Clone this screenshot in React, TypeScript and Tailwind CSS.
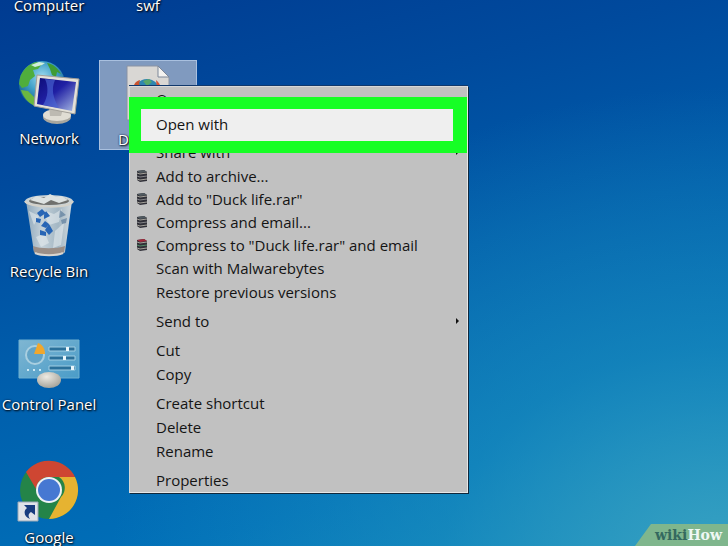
import type { ReactNode } from "react";
import clsx from "clsx";

interface MenuEntry {
  label: string;
  archive?: "dark" | "red";
  submenu?: boolean;
}

const menuGroups: MenuEntry[][] = [
  [
    { label: "Share with", submenu: true },
    { label: "Add to archive...", archive: "dark" },
    { label: 'Add to "Duck life.rar"', archive: "dark" },
    { label: "Compress and email...", archive: "dark" },
    { label: 'Compress to "Duck life.rar" and email', archive: "red" },
    { label: "Scan with Malwarebytes" },
    { label: "Restore previous versions" },
  ],
  [{ label: "Send to", submenu: true }],
  [{ label: "Cut" }, { label: "Copy" }],
  [{ label: "Create shortcut" }, { label: "Delete" }, { label: "Rename" }],
  [{ label: "Properties" }],
];

function NetworkIcon() {
  return (
    <svg viewBox="0 0 64 64" className="size-16" aria-hidden="true">
      <defs>
        <radialGradient id="globe" cx="50%" cy="35%" r="65%">
          <stop offset="0" stopColor="#9fdcf0" />
          <stop offset="0.5" stopColor="#3f9fc8" />
          <stop offset="1" stopColor="#125a86" />
        </radialGradient>
        <linearGradient id="screen" x1="0" y1="0" x2="1" y2="1">
          <stop offset="0" stopColor="#0c0c78" />
          <stop offset="0.45" stopColor="#2020a4" />
          <stop offset="1" stopColor="#a9bbe4" />
        </linearGradient>
      </defs>
      <circle cx="25" cy="24" r="23" fill="url(#globe)" />
      <path d="M3 18c2-8 9-14 16-16l6 2-4 5-5 1 2 6-5 4-2 6-6 2-3-4z" fill="#4fae3c" />
      <path d="M30 3c6 1 11 5 14 11l-4-2-1 5-4-2-2-6z" fill="#3f9b34" />
      <path d="M4 30l7 1 6 6 1 9c-7-3-12-9-14-16z" fill="#6bb840" />
      <path d="M14 5l8-3 6 1-3 2-7 2z" fill="#cfeeda" />
      <ellipse cx="40" cy="57" rx="14" ry="7" fill="#a9a79f" />
      <ellipse cx="40" cy="55" rx="14" ry="6" fill="#e0ddd4" />
      <path d="M32 46l14 3-2 7H33z" fill="#bdbab2" />
      <path d="M20 15l42 4-4 35-41-8z" fill="#e4e1d8" stroke="#a29f98" />
      <path d="M23 18l36 4-4 29-35-7z" fill="url(#screen)" />
      <path d="M28 19l10 1c-4 9-2 18 4 28l-16-3c5-8 6-17 2-26z" fill="#4a66d4" opacity="0.65" />
    </svg>
  );
}

function RecycleBinIcon() {
  return (
    <svg viewBox="0 0 64 64" className="size-16" aria-hidden="true">
      <defs>
        <linearGradient id="bin" x1="0" x2="1">
          <stop offset="0" stopColor="#8fa9bd" />
          <stop offset="0.35" stopColor="#c3d0d8" />
          <stop offset="0.7" stopColor="#a3b7c4" />
          <stop offset="1" stopColor="#d2dade" />
        </linearGradient>
      </defs>
      <path d="M9 8h46l-7 51c-1 4-29 4-31 0z" fill="url(#bin)" />
      <path d="M12 18l10 5-5 9zM25 17l12 4 8-5-3 13-10 3zM19 44l9-4 4 10-8 4zM38 38l9-8-3 22-8 3z" fill="#e3e9ec" opacity="0.6" />
      <path d="M43 17l6 5-7 3zM44 27l6-2-1 5-4 1z" fill="#5d7e9c" opacity="0.7" />
      <path d="M20 20l5-4 4 4-3 2-3 2zM29 18l4 5-6 3 0-4zM19 25l5 1-1 4-4-1zM24 33l4-5 4 3-3 4zM32 31l4 7-4 4-4-5zM23 37l6 2v4l-6-1z" fill="#2765b5" />
      <path d="M16 53c7 3 24 3 32 0l-1 6c-3 4-27 4-30 0z" fill="#9b8f88" />
      <path d="M18 60c6 3 22 3 28 0" fill="none" stroke="#d9d5cf" strokeWidth="2" />
      <ellipse cx="32" cy="8" rx="24" ry="6" fill="#c9d2d5" />
      <ellipse cx="32" cy="8" rx="20" ry="4" fill="#6f706d" />
      <path d="M13 7l7-4 7 2 6-4 6 3 5-1 7 4-9 3-8-3-7 4z" fill="#dde2e1" />
      <path d="M8 8c2 7 46 8 48 0" fill="none" stroke="#d4d2ca" strokeWidth="2" />
    </svg>
  );
}

function ControlPanelIcon() {
  return (
    <svg viewBox="0 0 64 64" className="size-16" aria-hidden="true">
      <defs>
        <linearGradient id="panel" x1="0" y1="0" x2="1" y2="1">
          <stop offset="0" stopColor="#7fb6d2" />
          <stop offset="1" stopColor="#4a9cc8" />
        </linearGradient>
        <radialGradient id="knob" cx="40%" cy="30%" r="70%">
          <stop offset="0" stopColor="#eeebe3" />
          <stop offset="1" stopColor="#a7a59c" />
        </radialGradient>
      </defs>
      <path d="M2 14h60v38H2z" fill="url(#panel)" stroke="#6fb0d0" />
      <circle cx="18" cy="29" r="9" fill="#62a3c6" stroke="#a9cfe0" strokeWidth="2" />
      <path d="M17 28L21 17c5 2 7 6 7 11z" fill="#f1a72c" />
      <path d="M32 21h26v4H32zM32 30h26v4H32zM32 40h26v4H32z" fill="#2a709a" stroke="#a0cde2" />
      <path d="M49 21h3v4h-3zM46 30h3v4h-3zM54 40h3v4h-3z" fill="#e9f6fb" />
      <path d="M10 43h2v2h-2zM16 43h2v2h-2zM22 43h2v2h-2z" fill="#cdeaf6" />
      <ellipse cx="32" cy="54" rx="12" ry="8" fill="url(#knob)" />
    </svg>
  );
}

function ChromeIcon() {
  return (
    <svg viewBox="0 0 64 64" className="size-16" aria-hidden="true">
      <circle cx="32" cy="31" r="29" fill="#248448" />
      <path d="M9 13a29 29 0 0 1 49 5H32a13 13 0 0 0-12 8l-1 4z" fill="#ce4632" />
      <path d="M58 18a29 29 0 0 1-26 42l12-22a13 13 0 0 0-2-20z" fill="#e6b331" />
      <circle cx="32" cy="31" r="13" fill="#eef1f5" />
      <circle cx="32" cy="31" r="11" fill="#4678d2" />
      <path d="M1 43h20v19H1z" fill="#dfe3e8" stroke="#9aa9b8" />
      <path d="M7 46h11v10l-4-3c-3 2-3 4-1 7-6-2-7-8-3-11z" fill="#173c7e" />
    </svg>
  );
}

function FileIcon() {
  return (
    <svg viewBox="0 0 64 64" className="size-16" aria-hidden="true">
      <path d="M11 5h31l11 11v43H11z" fill="#d9d7d4" stroke="#8a93a3" />
      <path d="M42 5v11h11z" fill="#f3f2f0" stroke="#7d8798" />
      <circle cx="31" cy="31" r="13" fill="#2f86b0" />
      <path d="M17 30c0-7 3-10 7-11l-1 4 2 3z" fill="#c9532f" />
      <path d="M40 19c4 3 5 7 5 12l-4-3z" fill="#d8573a" />
      <path d="M27 20l6-2 3 3-5 4z" fill="#57a66a" />
    </svg>
  );
}

function ArchiveIcon({ tone }: { tone: "dark" | "red" }) {
  return (
    <svg viewBox="0 0 12 12" className="size-3" aria-hidden="true">
      <path d="M1 1l7-1 3 2v9l-7 1-3-2z" fill="#303038" />
      <path d="M1 1l7-1 3 2-7 1z" fill={tone === "red" ? "#a3293b" : "#515a60"} />
      <path d="M1 3l3 1 7-1M1 9l3 1 7-1" fill="none" stroke="#a5a29a" />
      <path d="M1 6l3 1 7-1" fill="none" stroke={tone === "red" ? "#4f8a66" : "#848488"} />
    </svg>
  );
}

function DesktopItem({ label, selected, children }: { label: string; selected?: boolean; children?: ReactNode }) {
  return (
    <button
      type="button"
      className={clsx(
        "flex w-full flex-col items-center justify-end",
        selected && "h-[90px] border border-[#a9c0df] bg-[#809abf]",
        !selected && (children ? "h-[133px]" : "h-[15px]"),
      )}
    >
      {children}
      <span className="mt-1 h-5 text-[15px] leading-5 whitespace-nowrap text-white [text-shadow:1px_1px_2px_#000,0_0_2px_#001a44]">
        {label}
      </span>
    </button>
  );
}

function MenuItem({ label, archive, submenu }: MenuEntry) {
  return (
    <button
      type="button"
      role="menuitem"
      className={clsx("flex w-full items-center pr-2 text-left", archive ? "h-[23px]" : "h-6")}
    >
      <span className="flex w-[26px] shrink-0 pl-[6px]">{archive && <ArchiveIcon tone={archive} />}</span>
      <span className="flex-1 whitespace-nowrap">{label}</span>
      {submenu && (
        <svg viewBox="0 0 3 6" className="h-[6px] w-[3px]" aria-hidden="true">
          <path d="M0 0l3 3-3 3z" fill="#111" />
        </svg>
      )}
    </button>
  );
}

function ContextMenu() {
  return (
    <div
      role="menu"
      className="absolute top-[86px] left-[129px] w-[339px] border border-t-[#d8d8d8] border-r-[#e6e6e6] border-b-[#e6e6e6] border-l-[#d8d8d8] bg-[#c1c1c1] text-[15px] leading-5 text-[#141414] shadow-[1px_1px_0_#10283c,0_-1px_0_#10386c]"
    >
      <MenuItem label="Open" />
      <div className="h-[29px]" />
      {menuGroups.map((group, i) => (
        <div key={i} role="group" className={clsx(i > 0 && "mt-[5px]")}>
          {group.map((entry) => (
            <MenuItem key={entry.label} {...entry} />
          ))}
        </div>
      ))}

      {/* Highlight frame */}
      <div className="absolute -left-px top-[10px] w-[338px] bg-[#16ff25] py-3 pr-3.5 pl-3">
        <button
          type="button"
          role="menuitem"
          className="flex h-8 w-full items-center bg-[#efefef] pb-[3px] pl-[15px] text-left"
        >
          Open with
        </button>
      </div>
    </div>
  );
}

export default function App() {
  return (
    <main className="relative h-screen w-full overflow-hidden bg-[radial-gradient(ellipse_at_100%_105%,#3aa3c2_0%,#2499c080_28%,#1a90bd00_60%),linear-gradient(165deg,#003b91_0%,#004a9d_25%,#005dab_50%,#006fb8_80%,#0a80bc_100%)] font-['Open_Sans','Noto_Sans',sans-serif]">
      <div className="flex">
        <div className="flex w-[98px] flex-col">
          <DesktopItem label="Computer" />
          <DesktopItem label="Network">
            <NetworkIcon />
          </DesktopItem>
          <DesktopItem label="Recycle Bin">
            <RecycleBinIcon />
          </DesktopItem>
          <DesktopItem label="Control Panel">
            <ControlPanelIcon />
          </DesktopItem>
          <DesktopItem label="Google">
            <ChromeIcon />
          </DesktopItem>
        </div>
        <div className="ml-px flex w-[98px] flex-col gap-[45px]">
          <DesktopItem label="swf" />
          <DesktopItem label="Duck life" selected>
            <FileIcon />
          </DesktopItem>
        </div>
      </div>

      <ContextMenu />

      <a
        href="#wikihow"
        className="absolute right-0 bottom-0 flex h-[22px] items-center bg-[#7fb68d] pr-1.5 pl-5 font-['DejaVu_Serif',serif] text-sm font-bold text-[#34695f] [clip-path:polygon(16px_0,100%_0,100%_100%,0_100%)]"
      >
        wiki<span className="text-[#eef8f4]">How</span>
      </a>
    </main>
  );
}
